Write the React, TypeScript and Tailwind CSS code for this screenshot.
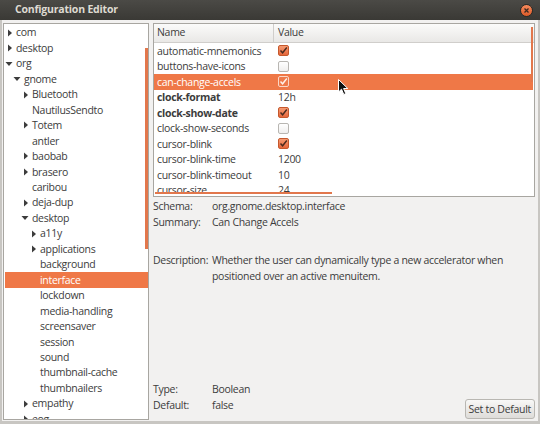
import React from "react";

type TreeItem = { label: string; level: number; arrow?: "right" | "down"; selected?: boolean };

const tree: TreeItem[] = [
  { label: "com", level: 0, arrow: "right" },
  { label: "desktop", level: 0, arrow: "right" },
  { label: "org", level: 0, arrow: "down" },
  { label: "gnome", level: 1, arrow: "down" },
  { label: "Bluetooth", level: 2, arrow: "right" },
  { label: "NautilusSendto", level: 2 },
  { label: "Totem", level: 2, arrow: "right" },
  { label: "antler", level: 2 },
  { label: "baobab", level: 2, arrow: "right" },
  { label: "brasero", level: 2, arrow: "right" },
  { label: "caribou", level: 2 },
  { label: "deja-dup", level: 2, arrow: "right" },
  { label: "desktop", level: 2, arrow: "down" },
  { label: "a11y", level: 3, arrow: "right" },
  { label: "applications", level: 3, arrow: "right" },
  { label: "background", level: 3 },
  { label: "interface", level: 3, selected: true },
  { label: "lockdown", level: 3 },
  { label: "media-handling", level: 3 },
  { label: "screensaver", level: 3 },
  { label: "session", level: 3 },
  { label: "sound", level: 3 },
  { label: "thumbnail-cache", level: 3 },
  { label: "thumbnailers", level: 3 },
  { label: "empathy", level: 2, arrow: "right" },
  { label: "eog", level: 2, arrow: "right" },
];

type Row = { name: string; bold?: boolean; value?: string; check?: boolean; selected?: boolean };

const rows: Row[] = [
  { name: "automatic-mnemonics", check: true },
  { name: "buttons-have-icons", check: false },
  { name: "can-change-accels", check: true, selected: true },
  { name: "clock-format", bold: true, value: "12h" },
  { name: "clock-show-date", bold: true, check: true },
  { name: "clock-show-seconds", check: false },
  { name: "cursor-blink", check: true },
  { name: "cursor-blink-time", value: "1200" },
  { name: "cursor-blink-timeout", value: "10" },
  { name: "cursor-size", value: "24" },
];

const font = { fontFamily: '"Open Sans", "Noto Sans", sans-serif' };

function Arrow({ dir }: { dir?: "right" | "down" }) {
  if (!dir) return <span className="w-[12px] shrink-0" />;
  const c = "#3c3c3c";
  return (
    <span className="w-[12px] shrink-0 flex items-center">
      {dir === "right" ? (
        <svg width="8" height="8" viewBox="0 0 8 8" className="ml-[2px]">
          <path d="M2 0.5 L6 4 L2 7.5 Z" fill={c} />
        </svg>
      ) : (
        <svg width="8" height="8" viewBox="0 0 8 8" className="ml-[1px]">
          <path d="M0.5 2 L7.5 2 L4 6 Z" fill={c} />
        </svg>
      )}
    </span>
  );
}

function Check({ on, selected }: { on: boolean; selected?: boolean }) {
  if (selected) {
    return (
      <span className="w-[11px] h-[11px] rounded-[2px] border border-[#fbd7c6] bg-[#ef7a4a] flex items-center justify-center">
        <svg width="9" height="9" viewBox="0 0 9 9">
          <path d="M1.5 4.5 L3.6 6.8 L7.8 1.5" stroke="#fff2ea" strokeWidth="1.4" fill="none" />
        </svg>
      </span>
    );
  }
  if (!on) {
    return <span className="w-[11px] h-[11px] rounded-[2px] border border-[#b8b6b2] bg-gradient-to-b from-white to-[#f0efee]" />;
  }
  return (
    <span className="w-[11px] h-[11px] rounded-[2px] border border-[#c5582c] bg-gradient-to-b from-[#f59a72] to-[#e5663a] flex items-center justify-center">
      <svg width="9" height="9" viewBox="0 0 9 9">
        <path d="M1.5 4.5 L3.6 6.8 L7.8 1.5" stroke="#4a2a1e" strokeWidth="1.4" fill="none" />
      </svg>
    </span>
  );
}

export default function App() {
  return (
    <div className="w-[540px] h-[424px] overflow-hidden bg-[#f2f1f0] flex flex-col text-[#3c3c3c] text-[10.5px] tracking-[-0.3px]" style={font}>
      {/* Title bar */}
      <div className="h-[20px] shrink-0 bg-gradient-to-b from-[#4b4a46] to-[#3a3935] flex items-center justify-between pl-[15px] pr-[7px]">
        <span className="font-bold text-[10.5px] text-[#dfdbd2] tracking-[-0.2px]">Configuration Editor</span>
        <span className="w-[13px] h-[13px] rounded-full bg-gradient-to-b from-[#f58a5c] to-[#dd5a26] border border-[#2a2926] flex items-center justify-center">
          <svg width="7" height="7" viewBox="0 0 7 7">
            <path d="M1.5 1.5 L5.5 5.5 M5.5 1.5 L1.5 5.5" stroke="#3c2a22" strokeWidth="1.3" />
          </svg>
        </span>
      </div>

      {/* Body */}
      <div className="flex-1 flex border-l-[2px] border-r-[2px] border-b-[3px] border-[#c8c6c2] pt-[3px] pl-[1px] pr-[3px] pb-[1px] gap-[4px] min-h-0">
        {/* Tree pane */}
        <div className="relative w-[146px] shrink-0 bg-white border border-[#a8a6a1] overflow-hidden pt-[1px]">
          {tree.map((t, i) => (
            <div
              key={i}
              className={`h-[15.46px] flex items-center whitespace-nowrap ${t.selected ? "bg-[#ef7847] text-white ml-[1px]" : ""}`}
            >
              <span className="shrink-0" style={{ width: 8 * t.level - (t.selected ? 1 : 0) }} />
              <Arrow dir={t.arrow} />
              <span className="leading-none">{t.label}</span>
            </div>
          ))}
          {/* overlay scrollbar */}
          <div className="absolute right-[0px] top-[24px] w-[3px] h-[201px] bg-[#e2774c]" />
        </div>

        {/* Right column */}
        <div className="flex-1 flex flex-col min-w-0">
          {/* Table */}
          <div className="relative h-[174px] shrink-0 bg-white border border-[#a8a6a1] overflow-hidden">
            <div className="h-[19px] flex items-center bg-gradient-to-b from-[#fbfbfa] to-[#e9e8e6] border-b border-[#d0cecb]">
              <div className="w-[120px] pl-[3px] h-full flex items-center border-r border-[#d0cecb]">Name</div>
              <div className="pl-[4px]">Value</div>
            </div>
            {rows.map((r, i) => (
              <div
                key={i}
                className={`h-[15.5px] flex items-center whitespace-nowrap ${r.selected ? "bg-[#ef7847] text-white mr-[1px]" : ""}`}
              >
                <div className={`w-[121px] pl-[3px] shrink-0 leading-none ${r.bold ? "font-bold" : ""}`}>{r.name}</div>
                <div className="pl-[3px] flex items-center leading-none">
                  {r.value !== undefined ? r.value : <Check on={!!r.check} selected={r.selected} />}
                </div>
              </div>
            ))}
            {/* scrollbars */}
            <div className="absolute right-[1px] top-[3px] w-[2px] h-[55px] bg-[#e2774c]" />
            <div className="absolute left-[1px] bottom-[2px] h-[2px] w-[177px] bg-[#e2774c]" />
            {/* mouse pointer */}
            <svg className="absolute left-[184px] top-[55px]" width="11" height="17" viewBox="0 0 11 17">
              <path d="M0.5 0.5 L0.5 13 L3.5 10.2 L5.8 15.5 L7.8 14.6 L5.6 9.5 L9.8 9.5 Z" fill="#111" stroke="#fff" strokeWidth="1" strokeLinejoin="round" />
            </svg>
          </div>

          {/* Details */}
          <div className="flex-1 flex flex-col pt-[2px]">
            <div className="h-[16px] flex items-center">
              <span className="w-[59px] shrink-0">Schema:</span>
              <span>org.gnome.desktop.interface</span>
            </div>
            <div className="h-[16px] flex items-center">
              <span className="w-[59px] shrink-0">Summary:</span>
              <span>Can Change Accels</span>
            </div>
            <div className="flex mt-[21px] leading-[16px]">
              <span className="w-[59px] shrink-0 whitespace-nowrap">Description:</span>
              <span className="whitespace-nowrap">
                Whether the user can dynamically type a new accelerator when
                <br />
                positioned over an active menuitem.
              </span>
            </div>
            <div className="flex-1" />
            <div className="h-[16px] flex items-center">
              <span className="w-[59px] shrink-0">Type:</span>
              <span>Boolean</span>
            </div>
            <div className="h-[16px] flex items-center justify-between">
              <div className="flex items-center">
                <span className="w-[59px] shrink-0">Default:</span>
                <span>false</span>
              </div>
              <button className="h-[20px] px-[3px] mt-[6px] rounded-[3px] border border-[#b9b7b2] bg-gradient-to-b from-[#f8f8f7] to-[#dedcd9] text-[10.5px] tracking-[-0.3px] text-[#3c3c3c] leading-none">
                Set to Default
              </button>
            </div>
            <div className="h-[6px]" />
          </div>
        </div>
      </div>
    </div>
  );
}
